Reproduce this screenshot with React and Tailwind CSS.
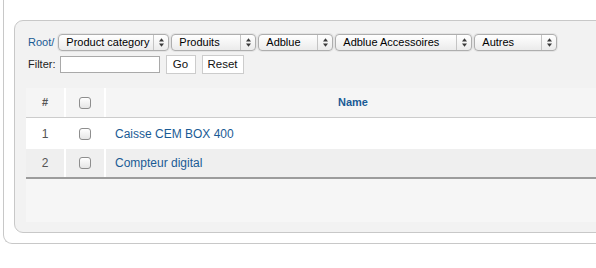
import React from "react";

const Arrows = () => (
  <svg width="5" height="9" viewBox="0 0 5 9" className="block">
    <polygon points="0,3.6 2.5,0.2 5,3.6" fill="#3a3a3a" />
    <polygon points="0,5.4 2.5,8.8 5,5.4" fill="#3a3a3a" />
  </svg>
);

const Select = ({ label, w }) => (
  <div
    className={`${w} h-[17px] flex items-stretch rounded-[4px] border border-[#aeaeae] bg-gradient-to-b from-white to-[#ebebeb] shadow-[0_0_0_1px_#e4e4e4]`}
  >
    <div className="flex-1 flex items-center pl-[7px] text-[11px] leading-none text-black">{label}</div>
    <div className="w-[15px] border-l border-[#c4c4c4] flex items-center justify-center">
      <Arrows />
    </div>
  </div>
);

const Check = () => (
  <div className="w-[12px] h-[12px] rounded-[3px] border border-[#8e8e8e] bg-gradient-to-b from-white to-[#e6e6e6]" />
);

export default function App() {
  return (
    <div className="w-[596px] h-[268px] overflow-hidden bg-white" style={{ fontFamily: '"Liberation Sans", Arial, sans-serif' }}>
      <div className="ml-[3px] w-[700px] border-l border-b border-[#c8c8c8] rounded-bl-[9px] pt-[20px] pb-[10px] pl-[10px]">
        <div className="w-[680px] border border-[#c8c8c8] rounded-[9px] bg-[#f2f2f2] pt-[13px] pb-[10px] pl-[11px]">
          <div className="ml-[2px] h-[17px] flex items-center">
            <span className="text-[11px] text-[#1a5b95] mr-[4px]">Root/</span>
            <div className="flex gap-[2px]">
              <Select label="Product category" w="w-[111px]" />
              <Select label="Produits" w="w-[85px]" />
              <Select label="Adblue" w="w-[75px]" />
              <Select label="Adblue Accessoires" w="w-[137px]" />
              <Select label="Autres" w="w-[83px]" />
            </div>
          </div>
          <div className="ml-[2px] mt-[4px] h-[19px] flex items-center">
            <span className="text-[11px] text-[#222] mr-[4px]">Filter:</span>
            <div className="w-[100px] h-[17px] border border-[#a9a9a9] bg-white" />
            <div className="ml-[6px] w-[30px] h-[19px] border border-[#cccccc] bg-white flex items-center justify-center text-[11.5px] text-[#111]">Go</div>
            <div className="ml-[6px] w-[42px] h-[19px] border border-[#cccccc] bg-white flex items-center justify-center text-[11.5px] text-[#111]">Reset</div>
          </div>
          <div className="mt-[14px] w-[574px] h-[134px] bg-[#f6f6f6]">
            <div className="grid grid-cols-[38px_38px_1fr] gap-x-[2px] bg-white h-[30px] border-b border-[#cccccc]">
              <div className="bg-[#f5f5f5] flex items-center justify-center text-[11px] font-bold text-[#555]">#</div>
              <div className="bg-[#f5f5f5] flex items-center justify-center"><Check /></div>
              <div className="bg-[#f5f5f5] flex items-center justify-center text-[11px] font-bold text-[#1a5b95]">Name</div>
            </div>
            <div className="grid grid-cols-[38px_38px_1fr] gap-x-[2px] bg-white h-[31px]">
              <div className="flex items-center justify-center text-[12px] text-[#555]">1</div>
              <div className="flex items-center justify-center"><Check /></div>
              <div className="flex items-center pl-[9px] text-[12px] text-[#1a5b95]">Caisse CEM BOX 400</div>
            </div>
            <div className="grid grid-cols-[38px_38px_1fr] gap-x-[2px] bg-white h-[30px] border-b-2 border-[#9c9c9c]">
              <div className="bg-[#efefef] flex items-center justify-center text-[12px] text-[#555]">2</div>
              <div className="bg-[#efefef] flex items-center justify-center"><Check /></div>
              <div className="bg-[#efefef] flex items-center pl-[9px] text-[12px] text-[#1a5b95]">Compteur digital</div>
            </div>
          </div>
        </div>
      </div>
    </div>
  );
}
